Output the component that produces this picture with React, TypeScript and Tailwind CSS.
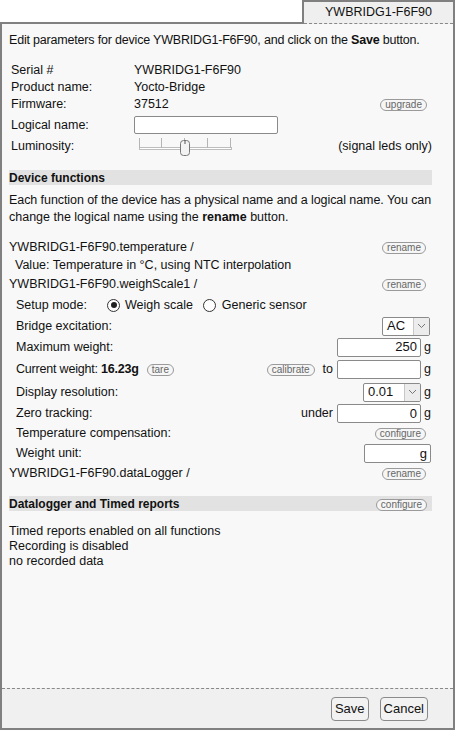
import React from "react";

const Pill = ({ children }: { children: React.ReactNode }) => (
  <span className="inline-flex items-center h-[12px] px-[4px] rounded-full border border-[#9a9a9a] bg-[#f6f6f6] text-[10px] leading-none text-[#666]">
    {children}
  </span>
);

const Chevron = () => (
  <svg width="9" height="6" viewBox="0 0 9 6">
    <path d="M1 1 L4.5 4.5 L8 1" fill="none" stroke="#777" strokeWidth="1" />
  </svg>
);

const Select = ({ value, w }: { value: string; w: string }) => (
  <div className={`flex h-[19px] ${w} border border-[#8a8a8a] bg-white rounded-[2px] overflow-hidden`}>
    <div className="flex-1 flex items-center pl-[4px] text-[13px]">{value}</div>
    <div className="w-[16px] flex items-center justify-center bg-[#ececec] border-l border-[#c8c8c8]">
      <Chevron />
    </div>
  </div>
);

const Input = ({ value, w }: { value?: string; w: string }) => (
  <div className={`h-[19px] ${w} border border-[#8a8a8a] bg-white rounded-[2px] flex items-center justify-end pr-[3px] text-[13px]`}>
    {value}
  </div>
);

const Radio = ({ on }: { on?: boolean }) => (
  <span className="inline-flex items-center justify-center w-[13px] h-[13px] rounded-full border border-[#333] bg-white">
    {on && <span className="w-[6px] h-[6px] rounded-full bg-[#222]" />}
  </span>
);

const Slider = () => (
  <svg width="95" height="21" viewBox="0 0 95 21">
    <rect x="1.5" y="11.5" width="92" height="2" fill="#fff" stroke="#bdbdbd" />
    {[1.5, 23.5, 46.5, 69.5, 92.5].map((x) => (
      <line key={x} x1={x} y1="2" x2={x} y2="12" stroke="#b5b5b5" strokeWidth="1" />
    ))}
    <rect x="42.5" y="4.5" width="9" height="15" rx="3" fill="#f2f2f2" stroke="#777" />
    <line x1="47" y1="4.5" x2="47" y2="8" stroke="#555" strokeWidth="1" />
  </svg>
);

export default function App() {
  return (
    <div className="w-[455px] h-[730px] flex flex-col font-['Liberation_Sans',Arial,sans-serif] text-[12.5px] text-[#111]">
      <div className="flex h-[24px]">
        <div className="flex-1 border-b-2 border-[#808080]" />
        <div className="w-[153px] border-2 border-b-0 border-[#808080] bg-[#efefef] flex flex-col">
          <div className="flex-1 flex items-center justify-center text-[12.5px] leading-none">YWBRIDG1-F6F90</div>
          <div className="border-b border-dashed border-[#888]" />
        </div>
      </div>
      <div className="flex-1 flex flex-col border-2 border-t-0 border-[#808080] bg-[#f8f8f8]">
        <div className="flex-1 pl-[7px] pr-[21px]">
          <div className="mt-[9px] leading-[15px] whitespace-nowrap tracking-[-0.19px]">
            Edit parameters for device YWBRIDG1-F6F90, and click on the <b>Save</b> button.
          </div>
          <div className="mt-[14px] pl-[2px]">
            <div className="flex items-center h-[17px]">
              <span className="w-[123px]">Serial #</span>
              <span>YWBRIDG1-F6F90</span>
            </div>
            <div className="flex items-center h-[17px]">
              <span className="w-[123px]">Product name:</span>
              <span>Yocto-Bridge</span>
            </div>
            <div className="flex items-center h-[17px]">
              <span className="w-[123px]">Firmware:</span>
              <span className="flex-1">37512</span>
              <span className="mr-[5px]">
                <Pill>upgrade</Pill>
              </span>
            </div>
            <div className="flex items-center h-[24px]">
              <span className="w-[123px]">Logical name:</span>
              <div className="w-[144px] h-[18px] border border-[#8a8a8a] bg-white rounded-[2px]" />
            </div>
            <div className="flex items-center h-[19px]">
              <span className="w-[127px]">Luminosity:</span>
              <span className="flex-1 flex">
                <Slider />
              </span>
              <span>(signal leds only)</span>
            </div>
          </div>
          <div className="mt-[14px] h-[15px] bg-[#e2e2e2] flex items-center text-[12px] font-bold">
            Device functions
          </div>
          <div className="mt-[7px] leading-[17px] whitespace-nowrap">
            <div className="tracking-[-0.07px]">Each function of the device has a physical name and a logical name. You can</div>
            <div>
              change the logical name using the <b>rename</b> button.
            </div>
          </div>
          <div className="mt-[12px] h-[18px] flex items-center justify-between">
            <span>YWBRIDG1-F6F90.temperature /</span>
            <span className="mr-[6px]">
              <Pill>rename</Pill>
            </span>
          </div>
          <div className="h-[18px] flex items-center pl-[6px]">Value: Temperature in °C, using NTC interpolation</div>
          <div className="h-[20px] flex items-center justify-between">
            <span>YWBRIDG1-F6F90.weighScale1 /</span>
            <span className="mr-[6px]">
              <Pill>rename</Pill>
            </span>
          </div>
          <div className="pl-[7px]">
            <div className="h-[22px] flex items-center">
              <span className="w-[91px]">Setup mode:</span>
              <Radio on />
              <span className="ml-[5px] mr-[10px]">Weigh scale</span>
              <Radio />
              <span className="ml-[6px]">Generic sensor</span>
            </div>
            <div className="h-[20px] flex items-center justify-between">
              <span>Bridge excitation:</span>
              <span className="mr-[2px]">
                <Select value="AC" w="w-[48px]" />
              </span>
            </div>
            <div className="h-[22px] flex items-center">
              <span className="flex-1">Maximum weight:</span>
              <Input value="250" w="w-[84px]" />
              <span className="w-[11px] pl-[3px]">g</span>
            </div>
            <div className="h-[23px] flex items-center">
              <span className="tracking-[-0.2px]">
                Current weight: <b>16.23g</b>
              </span>
              <span className="ml-[8px]">
                <Pill>tare</Pill>
              </span>
              <span className="flex-1" />
              <Pill>calibrate</Pill>
              <span className="ml-[8px] mr-[4px]">to</span>
              <Input w="w-[84px]" />
              <span className="w-[11px] pl-[3px]">g</span>
            </div>
            <div className="h-[22px] flex items-center">
              <span className="flex-1">Display resolution:</span>
              <Select value="0.01" w="w-[58px]" />
              <span className="w-[11px] pl-[3px]">g</span>
            </div>
            <div className="h-[21px] flex items-center">
              <span className="flex-1">Zero tracking:</span>
              <span className="mr-[4px]">under</span>
              <Input value="0" w="w-[84px]" />
              <span className="w-[11px] pl-[3px]">g</span>
            </div>
            <div className="h-[19px] flex items-center justify-between">
              <span>Temperature compensation:</span>
              <span className="mr-[6px]">
                <Pill>configure</Pill>
              </span>
            </div>
            <div className="h-[21px] flex items-center justify-between">
              <span>Weight unit:</span>
              <span className="mr-[1px]">
                <Input value="g" w="w-[67px]" />
              </span>
            </div>
          </div>
          <div className="h-[18px] flex items-center justify-between">
            <span>YWBRIDG1-F6F90.dataLogger /</span>
            <span className="mr-[6px]">
              <Pill>rename</Pill>
            </span>
          </div>
          <div className="mt-[14px] h-[15px] bg-[#e2e2e2] flex items-center justify-between text-[12px] font-bold">
            <span>Datalogger and Timed reports</span>
            <span className="mr-[5px] font-normal">
              <Pill>configure</Pill>
            </span>
          </div>
          <div className="mt-[13px] leading-[15px]">
            <div>Timed reports enabled on all functions</div>
            <div>Recording is disabled</div>
            <div>no recorded data</div>
          </div>
        </div>
        <div className="h-[40px] border-t border-dashed border-[#888] bg-[#f0f0f0] flex items-start justify-end gap-[11px] pr-[25px] pt-[8px]">
          <button className="h-[24px] px-[3px] rounded-[4px] border border-[#8a8a8a] bg-[#f2f2f2] text-[13px]">Save</button>
          <button className="h-[24px] px-[3px] rounded-[4px] border border-[#8a8a8a] bg-[#f2f2f2] text-[13px]">Cancel</button>
        </div>
      </div>
    </div>
  );
}
